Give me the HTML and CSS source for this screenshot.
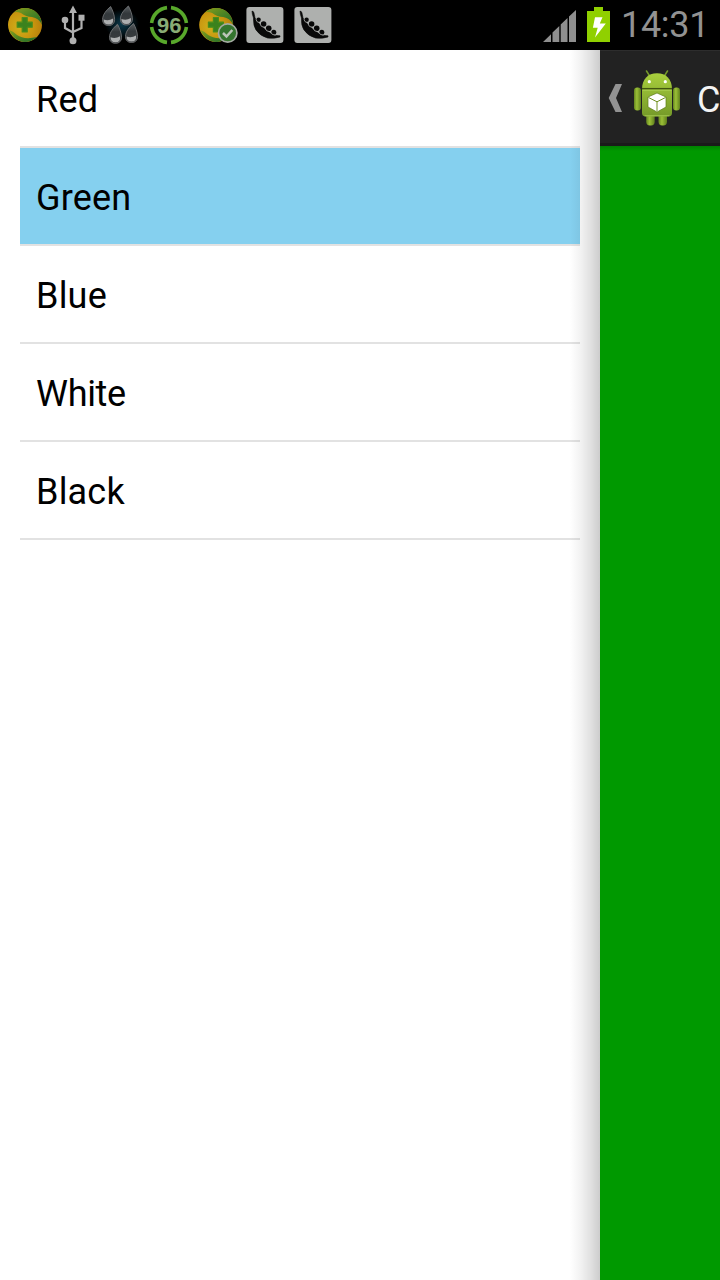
FILE: index.html
```html
<!DOCTYPE html>
<html lang="en">
<head>
<meta charset="utf-8">
<title>Colors</title>
<link rel="stylesheet" href="styles.css">
</head>
<body>
<svg class="defs" width="0" height="0" aria-hidden="true">
  <defs>
    <radialGradient id="ball" cx=".35" cy=".55" r=".65">
      <stop offset="0" stop-color="#d0b01c"/><stop offset=".6" stop-color="#c8960f"/><stop offset="1" stop-color="#b8800c"/>
    </radialGradient>
    <linearGradient id="leaf" x1="0" y1="0" x2="1" y2="1">
      <stop offset="0" stop-color="#8a9f1c"/><stop offset=".5" stop-color="#4c8424"/><stop offset="1" stop-color="#1e6b2a"/>
    </linearGradient>
    <linearGradient id="water" x1="0" y1="0" x2="0" y2="1">
      <stop offset="0" stop-color="#5c6164"/><stop offset=".4" stop-color="#33383b"/><stop offset="1" stop-color="#3c3f41"/>
    </linearGradient>
    <radialGradient id="glow">
      <stop offset="0" stop-color="#0b3a4c"/><stop offset="1" stop-color="#000"/>
    </radialGradient>
    <linearGradient id="robot" x1="0" y1="0" x2="0" y2="1">
      <stop offset="0" stop-color="#a9cf3d"/><stop offset="1" stop-color="#759a29"/>
    </linearGradient>
    <linearGradient id="limb" x1="0" y1="0" x2="1" y2="0">
      <stop offset="0" stop-color="#65851f"/><stop offset=".4" stop-color="#9bc037"/><stop offset="1" stop-color="#5f7e1c"/>
    </linearGradient>
    <clipPath id="ballclip"><circle cx="24" cy="25" r="17"/></clipPath>
    <g id="shield">
      <circle cx="24" cy="25" r="17" fill="url(#ball)"/>
      <g clip-path="url(#ballclip)">
        <path d="M12 13Q20 5 31 9Q40 13 41 25Q38 18 31 17Q25 17 20 13Q15 11 12 13Z" fill="url(#leaf)"/>
        <path d="M8 30Q12 31 16 35Q23 40 36 37Q30 43 21 42Q12 39 8 30Z" fill="url(#leaf)"/>
      </g>
      <path d="M21.200 17.500h5v4.700h5v5h-5v4.700h-5v-4.700h-5v-5h5z" fill="#3b821d" stroke="#498d1b" stroke-width="1.200" stroke-linejoin="round"/>
    </g>
    <g id="drop">
      <path d="M2-9.500C4-6 6-.5 6 3.500C6 7.500 3.500 9.500 0 9.500S-6 7.500-6 3.500C-6-1.500-2-6 2-9.500Z" fill="url(#water)" stroke="#707375" stroke-width=".9"/>
      <path d="M-5 3.500Q0 5.500 4.500 2.500Q5.500 8.500 0 8.500Q-5 8.500-5 3.500Z" fill="#adafb0"/>
    </g>
    <g id="pod">
      <rect x="5.400" y="7" width="37" height="36" rx="3" fill="#aeb0ae"/>
      <path d="M11 11Q13 11 13.300 14.500Q13.600 18 15.500 20.500L20 25L25 30L30 33.500Q34 36 39 35.800V37Q33 39 26.500 38Q19 36 15 30Q12 25.500 12.500 18Q11 14 11 11Z" fill="#090909" stroke="#090909" stroke-width=".6"/>
      <g fill="#090909"><circle cx="17.600" cy="19.700" r="2.200"/><circle cx="22.600" cy="24" r="2.800"/><circle cx="27.700" cy="28.300" r="2.800"/><circle cx="32.800" cy="32.300" r="2.500"/></g>
      <path d="M15 19.500Q15.700 22.500 18.500 22.700Q19.500 27.200 23.500 27.700Q25 31.800 29.500 31.900Q30.500 35 34.500 35.300" fill="none" stroke="#aeb0ae" stroke-width=".8"/>
    </g>
  </defs>
</svg>

<header class="statusbar">
  <div class="notifications">
    <svg class="slot" viewBox="0 0 48 50"><use href="#shield"/></svg>
    <svg class="slot" viewBox="0 0 48 50">
      <g fill="none" stroke="#b0b0b0" stroke-width="2.200"><path d="M24 10V40M16 20V28L24 32.500M32.500 19V28L24 32"/></g>
      <g fill="#b0b0b0"><path d="M24 5.500L28 13H20Z"/><circle cx="16" cy="20" r="3.300"/><path d="M29.500 14.700h6v6h-6z"/><circle cx="24" cy="40.800" r="3.500"/></g>
    </svg>
    <svg class="slot" viewBox="0 0 48 50">
      <ellipse cx="25" cy="24" rx="17" ry="15" fill="url(#glow)"/>
      <use href="#drop" transform="translate(11.600 16)"/>
      <use href="#drop" transform="translate(29.400 15.500)"/>
      <use href="#drop" transform="translate(18.500 33.800)"/>
      <use href="#drop" transform="translate(34.500 33)"/>
    </svg>
    <svg class="slot" viewBox="0 0 48 50">
      <g fill="none" stroke="#58a82b" stroke-width="3.600"><path d="M26 7.600A17.500 17.500 0 0 1 41.400 23M41.400 27A17.500 17.500 0 0 1 26 42.400M22 42.400A17.500 17.500 0 0 1 6.600 27M6.600 23A17.500 17.500 0 0 1 22 7.600"/></g>
      <text x="24.300" y="32.500" class="score">96</text>
    </svg>
    <svg class="slot" viewBox="0 0 48 50">
      <use href="#shield" x="-.8"/>
      <circle cx="34.700" cy="33" r="9.200" fill="#34752e" stroke="#a3aaa1" stroke-width="1.700"/>
      <path d="M30 33L33.500 36.500L39.300 30" fill="none" stroke="#bcc5b9" stroke-width="2.500"/>
    </svg>
    <svg class="slot" viewBox="0 0 48 50"><use href="#pod"/></svg>
    <svg class="slot" viewBox="0 0 48 50"><use href="#pod"/></svg>
  </div>
  <div class="system">
    <svg class="signal" viewBox="0 0 33 32"><path d="M0 32L8 24.200V32ZM9.500 22.600L16.300 16V32H9.500ZM17.700 14.500L24.500 8V32H17.700ZM26 6.500L33 0V32H26Z" fill="#8f8f8f"/></svg>
    <svg class="battery" viewBox="0 0 23 35"><path d="M7 0h9v4h7v31H0V4h7z" fill="#90d000"/><path d="M8 10.300H15.500L12.800 16.500H18.800L8 30.500L10.700 20.700H5.900Z" fill="#fff"/></svg>
    <time class="clock">14:31</time>
  </div>
</header>

<main class="screen">
  <nav class="drawer">
    <ul class="menu">
      <li class="item">Red</li>
      <li class="item selected">Green</li>
      <li class="item">Blue</li>
      <li class="item tight">White</li>
      <li class="item">Black</li>
    </ul>
  </nav>
  <section class="content">
    <div class="actionbar">
      <svg class="up" viewBox="0 0 14 28"><path d="M7.500 0H14L8 14L14 28H7.500L.7 14Z" fill="#939393"/></svg>
      <svg class="robot" viewBox="0 0 48 56">
        <path d="M13.500 1L17 6.500M34.500 1L31 6.500" stroke="#759a29" stroke-width="1.500" stroke-linecap="round"/>
        <g fill="url(#limb)"><rect x="1" y="17.500" width="7" height="23" rx="3.200"/><rect x="40" y="17.500" width="7" height="23" rx="3.200"/><rect x="13.200" y="40" width="8.500" height="15.500" rx="3.700"/><rect x="25.500" y="40" width="8.500" height="15.500" rx="3.700"/></g>
        <path d="M9 19.500C9 9 15 3.300 24 3.300S39 9 39 19.500V43Q39 46.500 35 46.500H13Q9 46.500 9 43Z" fill="url(#robot)"/>
        <path d="M9 18.700H39" stroke="#42550f" stroke-width="1.500"/>
        <path d="M9.500 20.200H38.500M11.500 45.800H36.500" stroke="#b4d65b" stroke-width=".8"/>
        <circle cx="16.300" cy="11.700" r="1.600" fill="#fff"/><circle cx="32.300" cy="11.700" r="1.600" fill="#fff"/>
        <path d="M24 23L33 27V37L24 42L15 37V27Z" fill="#fff" stroke="#5d7b19" stroke-width=".7"/>
        <path d="M15.500 27.500L24 31.800L32.500 27.500M24 31.800V41" fill="none" stroke="#70901f" stroke-width="1"/>
      </svg>
      <h1 class="title">C</h1>
    </div>
    <div class="canvas"></div>
  </section>
</main>
</body>
</html>
```

FILE: styles.css
```css
* { box-sizing: border-box; }

body {
  margin: 0;
  width: 720px;
  height: 1280px;
  overflow: hidden;
  display: flex;
  flex-direction: column;
  background: #fff;
  font-family: Roboto, sans-serif;
}

svg { display: block; flex: none; }

.defs { position: absolute; }

.statusbar {
  height: 50px;
  flex: none;
  display: flex;
  justify-content: space-between;
  background: #000;
}

.notifications {
  display: flex;
  padding-left: 1px;
}

.slot { width: 48px; height: 50px; }

.score {
  font: bold 22px "Liberation Sans", sans-serif;
  text-anchor: middle;
  fill: #88ad75;
}

.system {
  display: flex;
  align-items: flex-start;
  padding-right: 13px;
}

.signal { width: 33px; height: 32px; margin: 10px 11px 0 0; }

.battery { width: 23px; height: 35px; margin: 7px 11px 0 0; }

.clock {
  width: 86px;
  font-size: 36px;
  line-height: 50px;
  letter-spacing: -.3px;
  white-space: nowrap;
  color: #929292;
}

.screen {
  flex: 1;
  display: flex;
}

.drawer {
  width: 600px;
  flex: none;
  padding: 0 20px;
  background: #fff;
  position: relative;
}

/* Shadow cast by the content pane over the drawer's edge */
.drawer::after {
  content: "";
  position: absolute;
  inset: 0 0 0 auto;
  width: 30px;
  background: linear-gradient(to right, rgba(0, 0, 0, 0), rgba(0, 0, 0, .05) 35%, rgba(0, 0, 0, .12) 70%, rgba(0, 0, 0, .2));
}

.menu {
  list-style: none;
  margin: 0;
  padding: 0;
}

.item {
  height: 98px;
  padding: 2px 0 0 16px;
  border-bottom: 2px solid #e2e2e2;
  font-size: 36px;
  line-height: 97px;
  letter-spacing: .2px;
  color: #000;
}

.tight { letter-spacing: -.3px; }

.selected { background: #85d0ef; }

.content {
  flex: 1;
  min-width: 0;
  display: flex;
  flex-direction: column;
  overflow: hidden;
}

.actionbar {
  height: 96px;
  flex: none;
  display: flex;
  align-items: center;
  padding: 1px 0 0 8px;
  background: #222;
  border-top: 1px solid #2d2d2d;
  border-bottom: 3px solid #1a1a1a;
}

.up { width: 14px; height: 28px; }

.robot { width: 48px; height: 56px; margin-left: 11px; }

.title {
  margin: 5px 0 0 16px;
  font-size: 36px;
  font-weight: 400;
  line-height: 48px;
  color: #f3f3f3;
}

.canvas {
  flex: 1;
  background: linear-gradient(#008000, #090 5px);
}
```
